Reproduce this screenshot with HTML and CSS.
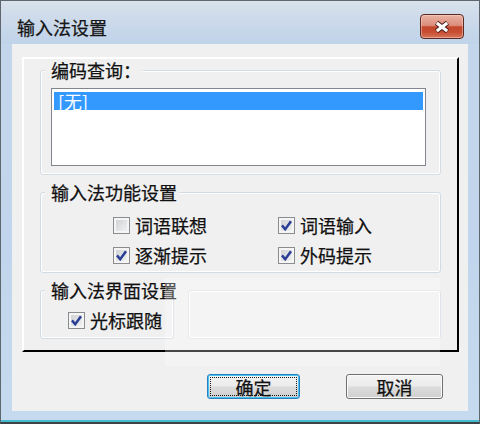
FILE: index.html
```html
<!DOCTYPE html>
<html lang="zh-CN">
<head>
<meta charset="utf-8">
<title>输入法设置</title>
<link rel="stylesheet" href="styles.css">
</head>
<body>
<div class="window">
  <div class="titlebar">
    <span class="title">输入法设置</span>
    <button class="close" aria-label="关闭">
      <svg width="16" height="12" viewBox="0 0 16 12">
        <path d="M2.5 1.8 L13.5 10.2 M13.5 1.8 L2.5 10.2" stroke="#4a1d16" stroke-width="5.2" fill="none"/>
        <path d="M2.8 2 L13.2 10 M13.2 2 L2.8 10" stroke="#ffffff" stroke-width="3.2" fill="none"/>
      </svg>
    </button>
  </div>
  <div class="client">
    <div class="panel">
      <div class="group">
        <div class="group-title">编码查询：</div>
        <div class="listbox">
          <div class="item selected">[无]</div>
        </div>
      </div>
      <div class="group spaced">
        <div class="group-title">输入法功能设置</div>
        <div class="options">
          <label class="opt"><span class="cb"></span>词语联想</label>
          <label class="opt"><span class="cb"><svg width="15" height="15" viewBox="0 0 15 15"><path d="M3 7.4 L6.2 11.2 L12 3.2" stroke="#2a3e96" stroke-width="2.5" fill="none"/></svg></span>词语输入</label>
          <label class="opt"><span class="cb"><svg width="15" height="15" viewBox="0 0 15 15"><path d="M3 7.4 L6.2 11.2 L12 3.2" stroke="#2a3e96" stroke-width="2.5" fill="none"/></svg></span>逐渐提示</label>
          <label class="opt"><span class="cb"><svg width="15" height="15" viewBox="0 0 15 15"><path d="M3 7.4 L6.2 11.2 L12 3.2" stroke="#2a3e96" stroke-width="2.5" fill="none"/></svg></span>外码提示</label>
        </div>
      </div>
      <div class="group-row">
        <div class="group ui-group">
          <div class="group-title">输入法界面设置</div>
          <label class="opt follow"><span class="cb"><svg width="15" height="15" viewBox="0 0 15 15"><path d="M3 7.4 L6.2 11.2 L12 3.2" stroke="#2a3e96" stroke-width="2.5" fill="none"/></svg></span>光标跟随</label>
        </div>
        <div class="group empty-group"></div>
      </div>
    </div>
    <div class="buttons">
      <button class="btn btn-default"><span class="focus-ring">确定</span></button>
      <button class="btn btn-cancel">取消</button>
    </div>
    <div class="haze"></div>
  </div>
  <div class="frame-bottom"></div>
</div>
</body>
</html>
```
FILE: styles.css
```css
html, body {
  margin: 0;
  padding: 0;
  background: #c2d6ec;
}

body {
  font-family: "Noto Sans CJK SC", "Noto Sans", sans-serif;
  font-size: 18px;
  color: #111;
  -webkit-text-stroke: 0.25px currentColor;
}

.window {
  width: 480px;
  height: 424px;
  box-sizing: border-box;
  border: 1px solid #5f666e;
  border-bottom: 2px solid #3c4246;
  background: linear-gradient(180deg, #c3d6ec 0%, #c1d5ec 60%, #c6daef 100%);
  display: flex;
  flex-direction: column;
}

.titlebar {
  height: 43px;
  box-sizing: border-box;
  padding: 13px 15px 0 16px;
  display: flex;
  justify-content: space-between;
  align-items: flex-start;
  background: linear-gradient(180deg, #d8e2ed 0%, #cfdbea 35%, #bfd3ea 100%);
}

.title {
  margin-top: 4px;
  line-height: 18px;
  font-size: 18px;
  color: #151515;
}

.close {
  width: 44px;
  height: 25px;
  padding: 0;
  box-sizing: border-box;
  border: 1px solid #5b2a22;
  border-radius: 4px;
  background: linear-gradient(180deg, #eab3a4 0%, #dc8d7a 45%, #c5462d 52%, #c74e33 75%, #d8765b 100%);
  box-shadow: inset 0 0 0 1px rgba(255, 220, 210, 0.45);
  display: flex;
  align-items: center;
  justify-content: center;
}

.client {
  position: relative;
  height: 367px;
  margin: 0 11px;
  background: #f0f0f0;
  display: flex;
  flex-direction: column;
}

.frame-bottom {
  flex: 1;
  border-bottom: 2px solid #45bccd;
}

.panel {
  margin: 13px 9px 0 10px;
  border-top: 2px solid #ffffff;
  border-left: 2px solid #ffffff;
  border-right: 2px solid #000000;
  border-bottom: 2px solid #000000;
  padding: 11px 16px 11px 16px;
  display: flex;
  flex-direction: column;
}

.group {
  border: 1px solid #d3dce3;
  border-radius: 3px;
  box-shadow: inset 0 0 0 1px #ffffff;
  display: flex;
  flex-direction: column;
  align-items: flex-start;
}

.group.spaced {
  margin-top: 17px;
}

.group-title {
  margin: -10px 0 0 4px;
  padding: 0 2px 0 6px;
  height: 18px;
  line-height: 18px;
  background: #f0f0f0;
  white-space: nowrap;
  color: #111;
}

.listbox {
  align-self: stretch;
  margin: 9px 14px 8px 10px;
  height: 78px;
  box-sizing: border-box;
  border: 1px solid #82868e;
  background: #ffffff;
  padding: 3px 2px;
}

.item {
  height: 18px;
  line-height: 18px;
  padding-left: 4px;
}

.item.selected {
  background: #3399ff;
  color: #ffffff;
  -webkit-text-stroke: 0;
}

.options {
  display: grid;
  grid-template-columns: 165px auto;
  row-gap: 6px;
  margin: 12px 0 5px 72px;
}

.opt {
  display: flex;
  align-items: center;
  gap: 5px;
  height: 24px;
  line-height: 18px;
  white-space: nowrap;
}

.cb {
  width: 17px;
  height: 17px;
  box-sizing: border-box;
  border: 1px solid #8a8c8f;
  background: linear-gradient(135deg, #cbcdd0 0%, #e3e4e5 55%, #f6f6f6 100%);
  box-shadow: inset 0 0 0 2px #f5f5f5;
  display: flex;
  align-items: center;
  justify-content: center;
  flex: none;
}

.cb svg {
  display: block;
}

.group-row {
  margin-top: 17px;
  display: flex;
  gap: 14px;
}

.ui-group {
  width: 134px;
  box-sizing: border-box;
  flex: none;
}

.opt.follow {
  margin: 9px 0 6px 27px;
}

.empty-group {
  flex: 1;
  border-color: #dde3e8;
}

.buttons {
  margin-top: 22px;
  padding-right: 25px;
  display: flex;
  justify-content: flex-end;
  gap: 46px;
}

.btn {
  height: 25px;
  box-sizing: border-box;
  padding: 0;
  font-family: inherit;
  font-size: 18px;
  line-height: 18px;
  color: #111;
  -webkit-text-stroke: 0.25px currentColor;
  border: 1px solid #707070;
  border-radius: 3px;
  background: linear-gradient(180deg, #f3f3f3 0%, #ebebeb 48%, #dcdcdc 52%, #cfcfcf 100%);
  box-shadow: inset 0 0 0 1px #fbfbfb;
  display: flex;
  align-items: center;
  justify-content: center;
}

.btn-default {
  width: 93px;
  border: 1px solid #2a7fc0;
  box-shadow: inset 0 0 0 1px #47c3ef;
  align-items: stretch;
}

.btn-cancel {
  width: 97px;
}

.focus-ring {
  flex: 1;
  margin: 2px;
  border: 1px dotted #1a1a1a;
  display: flex;
  align-items: center;
  justify-content: center;
}

.haze {
  position: absolute;
  left: 153px;
  top: 234px;
  width: 275px;
  height: 88px;
  background: rgba(255, 255, 255, 0.28);
  pointer-events: none;
}
```
